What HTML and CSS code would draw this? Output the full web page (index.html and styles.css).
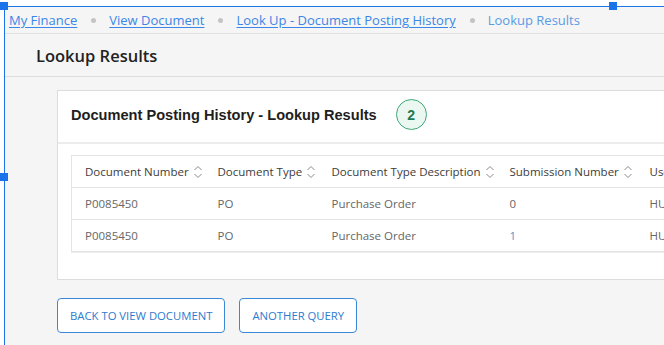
FILE: index.html
```html
<!DOCTYPE html>
<html>
<head>
<meta charset="utf-8">
<link rel="stylesheet" href="styles.css">
</head>
<body>
<div class="frame">
  <span class="handle h-tl"></span>
  <span class="handle h-tm"></span>
  <span class="handle h-ml"></span>
  <div class="clip">
    <nav class="crumbs">
      <a href="#">My Finance</a><span class="dot"></span>
      <a href="#">View Document</a><span class="dot"></span>
      <a href="#">Look Up - Document Posting History</a><span class="dot"></span>
      <span class="current">Lookup Results</span>
    </nav>
    <div class="page-title">Lookup Results</div>
    <main class="content">
      <section class="card">
        <header class="card-head">
          <h2>Document Posting History - Lookup Results</h2>
          <span class="badge">2</span>
        </header>
        <div class="card-body">
          <table class="grid">
            <colgroup>
              <col class="c1"><col class="c2"><col class="c3"><col class="c4"><col class="c5">
            </colgroup>
            <thead>
              <tr>
                <th><span class="th">Document Number<svg class="sort" viewBox="0 0 10 16"><path d="M1.5 6 L5 2.5 L8.5 6 M1.5 10 L5 13.5 L8.5 10"/></svg></span></th>
                <th><span class="th">Document Type<svg class="sort" viewBox="0 0 10 16"><path d="M1.5 6 L5 2.5 L8.5 6 M1.5 10 L5 13.5 L8.5 10"/></svg></span></th>
                <th><span class="th">Document Type Description<svg class="sort" viewBox="0 0 10 16"><path d="M1.5 6 L5 2.5 L8.5 6 M1.5 10 L5 13.5 L8.5 10"/></svg></span></th>
                <th><span class="th">Submission Number<svg class="sort" viewBox="0 0 10 16"><path d="M1.5 6 L5 2.5 L8.5 6 M1.5 10 L5 13.5 L8.5 10"/></svg></span></th>
                <th><span class="th">User ID<svg class="sort" viewBox="0 0 10 16"><path d="M1.5 6 L5 2.5 L8.5 6 M1.5 10 L5 13.5 L8.5 10"/></svg></span></th>
              </tr>
            </thead>
            <tbody>
              <tr><td>P0085450</td><td>PO</td><td>Purchase Order</td><td>0</td><td>HUANG</td></tr>
              <tr><td>P0085450</td><td>PO</td><td>Purchase Order</td><td class="num-link">1</td><td>HUANG</td></tr>
            </tbody>
          </table>
        </div>
      </section>
      <div class="actions">
        <button class="btn">BACK TO VIEW DOCUMENT</button>
        <button class="btn">ANOTHER QUERY</button>
      </div>
    </main>
  </div>
</div>
</body>
</html>
```
FILE: styles.css
```css
html, body {
  margin: 0;
  padding: 0;
  background: #ffffff;
  overflow: hidden;
  width: 664px;
  height: 345px;
}
body {
  font-family: "Open Sans", "Liberation Sans", sans-serif;
}
.frame {
  position: relative;
  margin: 6px 0 0 4px;
  border-top: 1px solid #1a73e8;
  border-left: 1px solid #1a73e8;
  background: #f5f5f5;
  width: 659px;
  height: 338px;
}
.clip {
  width: 100%;
  height: 100%;
  overflow: hidden;
}
.handle {
  position: absolute;
  width: 8px;
  height: 8px;
  background: #1a73e8;
  z-index: 5;
}
.h-tl { left: -5px; top: -5px; }
.h-tm { left: 604px; top: -5px; }
.h-ml { left: -5px; top: 166px; }

.crumbs {
  height: 26px;
  display: flex;
  align-items: center;
  padding-left: 4px;
  font-size: 13px;
  border-bottom: 1px solid #e2e2e2;
  white-space: nowrap;
}
.crumbs a {
  color: #3b86e6;
  text-decoration: underline;
  text-underline-offset: 2px;
}
.crumbs .current {
  color: #5a9be6;
}
.dot {
  width: 5px;
  height: 5px;
  border-radius: 50%;
  background: #c4c4c4;
  margin: 0 13px 0 14px;
}
.page-title {
  height: 42px;
  display: flex;
  align-items: center;
  padding-left: 31px;
  font-size: 16.5px;
  font-weight: 600;
  color: #222;
  border-bottom: 1px solid #dedede;
}
.content {
  padding: 13px 0 0 52px;
}
.card {
  background: #fff;
  border: 1px solid #dddddd;
  width: 1000px;
}
.card-head {
  display: flex;
  align-items: center;
  gap: 19px;
  padding: 8px 13px 12px;
  border-bottom: 2px solid #ececec;
}
.card-head h2 {
  margin: 0;
  font-family: "Liberation Sans", Arial, sans-serif;
  font-size: 14.6px;
  font-weight: bold;
  color: #1e1e1e;
}
.badge {
  width: 29px;
  height: 29px;
  border-radius: 50%;
  border: 1px solid #3ea877;
  background: #ebf7f1;
  color: #1f7a52;
  font-family: "Liberation Sans", Arial, sans-serif;
  font-weight: bold;
  font-size: 14px;
  display: flex;
  align-items: center;
  justify-content: center;
}
.card-body {
  padding: 11px 13px 27px;
}
.grid {
  border-collapse: collapse;
  table-layout: fixed;
  width: 980px;
  border: 1px solid #e4e4e4;
  box-shadow: 0 1px 0 #ececec;
}
.c1 { width: 133px; }
.c2 { width: 114px; }
.c3 { width: 178px; }
.c4 { width: 140px; }
.c5 { width: 415px; }
.grid th {
  height: 31px;
  padding: 0 0 0 13px;
  text-align: left;
  font-weight: normal;
  font-size: 11.5px;
  color: #3c3c3c;
  white-space: nowrap;
}
.th {
  display: inline-flex;
  align-items: center;
  gap: 4px;
}
.sort {
  width: 10px;
  height: 16px;
  fill: none;
  stroke: #8a8a8a;
  stroke-width: 1;
}
.grid td {
  height: 31px;
  padding: 0 0 0 13px;
  border-top: 1px solid #e4e4e4;
  font-size: 11.5px;
  color: #666;
  white-space: nowrap;
}
.grid td.num-link {
  color: #5b8fcb;
}
.actions {
  display: flex;
  gap: 14px;
  padding-top: 18px;
}
.btn {
  height: 35px;
  padding: 0 12px;
  background: #fff;
  border: 1px solid #3b88d8;
  border-radius: 4px;
  color: #2d7bcf;
  font-family: "Open Sans", "Liberation Sans", sans-serif;
  font-size: 11.3px;
}
```
